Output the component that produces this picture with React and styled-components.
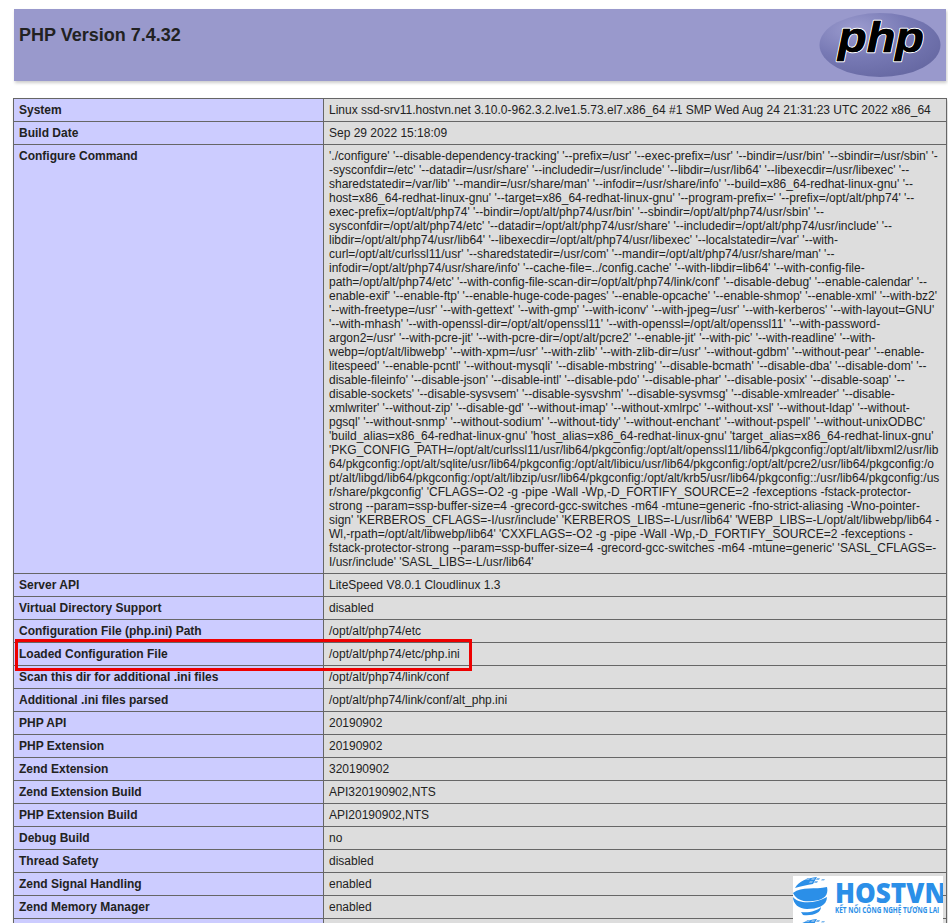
import React from 'react';
import styled, { createGlobalStyle } from 'styled-components';

const Global = createGlobalStyle`
  html, body { margin: 0; padding: 0; height: 923px; overflow: hidden; background: #fff; }
  body { font-family: "Liberation Sans", Arial, sans-serif; color: #222; }
`;
const Page = styled.div`
  position: relative;
  height: 923px;
  overflow: hidden;
  padding: 9px 0 0 14px;
  box-sizing: border-box;
`;
const Header = styled.header`
  width: 932px;
  height: 72px;
  box-sizing: border-box;
  background: #99c;
  box-shadow: 1px 2px 3px #ccc;
  padding: 16px 5px 0;
  display: flex;
  justify-content: space-between;
  align-items: flex-start;
`;
const Title = styled.h1`
  margin: 0;
  font-size: 18px;
  line-height: 21px;
  font-weight: bold;
  color: #222;
`;
const Logo = styled.svg`
  width: 124px;
  height: 68px;
  margin: -14px -1px 0 0;
  flex: none;
`;
const Table = styled.table`
  border-collapse: collapse;
  table-layout: fixed;
  width: 934px;
  margin: 17px 0 0 -1px;
  box-shadow: 1px 2px 3px #ccc;
`;
const Key = styled.td`
  border: 1px solid #666;
  background: #ccf;
  font-size: 12px;
  line-height: 14px;
  font-weight: bold;
  vertical-align: baseline;
  padding: 4px 5px;
  color: #222;
`;
const Value = styled.td`
  border: 1px solid #666;
  background: #ddd;
  font-size: 12px;
  line-height: 14px;
  vertical-align: baseline;
  padding: 4px 6px 4px 5px;
  color: #222;
  overflow-wrap: break-word;
`;
const Highlight = styled.div`
  position: absolute;
  left: 15px;
  top: 639px;
  width: 457px;
  height: 32px;
  box-sizing: border-box;
  border: 3px solid #ee0000;
`;
const Brand = styled.div`
  position: absolute;
  left: 793px;
  top: 876px;
  width: 150px;
  height: 47px;
  overflow: hidden;
  background: #fff;
  color: #2b8fe8;
`;
const BrandRow = styled.div`
  display: flex;
  align-items: flex-start;
  height: 41px;
  margin-bottom: 1px;
`;
const BrandMark = styled.svg`
  width: 35px;
  height: 41px;
  flex: none;
`;
const BrandText = styled.div`
  margin-left: 7px;
  width: 108px;
  display: flex;
  flex-direction: column;
`;
const BrandName = styled.div`
  font-family: "Open Sans", sans-serif;
  font-weight: 800;
  font-size: 29px;
  line-height: 26px;
  height: 26px;
  margin-top: 3px;
  white-space: nowrap;
  transform: scaleX(0.9);
  transform-origin: left center;
`;
const BrandTag = styled.div`
  font-family: "Open Sans", sans-serif;
  font-weight: 700;
  font-size: 8px;
  line-height: 9px;
  white-space: nowrap;
  transform: scaleX(0.8);
  transform-origin: left center;
`;

const configure = `'./configure' '--disable-dependency-tracking' '--prefix=/usr' '--exec-prefix=/usr' '--bindir=/usr/bin' '--sbindir=/usr/sbin' '--sysconfdir=/etc' '--datadir=/usr/share' '--includedir=/usr/include' '--libdir=/usr/lib64' '--libexecdir=/usr/libexec' '--sharedstatedir=/var/lib' '--mandir=/usr/share/man' '--infodir=/usr/share/info' '--build=x86_64-redhat-linux-gnu' '--host=x86_64-redhat-linux-gnu' '--target=x86_64-redhat-linux-gnu' '--program-prefix=' '--prefix=/opt/alt/php74' '--exec-prefix=/opt/alt/php74' '--bindir=/opt/alt/php74/usr/bin' '--sbindir=/opt/alt/php74/usr/sbin' '--sysconfdir=/opt/alt/php74/etc' '--datadir=/opt/alt/php74/usr/share' '--includedir=/opt/alt/php74/usr/include' '--libdir=/opt/alt/php74/usr/lib64' '--libexecdir=/opt/alt/php74/usr/libexec' '--localstatedir=/var' '--with-curl=/opt/alt/curlssl11/usr' '--sharedstatedir=/usr/com' '--mandir=/opt/alt/php74/usr/share/man' '--infodir=/opt/alt/php74/usr/share/info' '--cache-file=../config.cache' '--with-libdir=lib64' '--with-config-file-path=/opt/alt/php74/etc' '--with-config-file-scan-dir=/opt/alt/php74/link/conf' '--disable-debug' '--enable-calendar' '--enable-exif' '--enable-ftp' '--enable-huge-code-pages' '--enable-opcache' '--enable-shmop' '--enable-xml' '--with-bz2' '--with-freetype=/usr' '--with-gettext' '--with-gmp' '--with-iconv' '--with-jpeg=/usr' '--with-kerberos' '--with-layout=GNU' '--with-mhash' '--with-openssl-dir=/opt/alt/openssl11' '--with-openssl=/opt/alt/openssl11' '--with-password-argon2=/usr' '--with-pcre-jit' '--with-pcre-dir=/opt/alt/pcre2' '--enable-jit' '--with-pic' '--with-readline' '--with-webp=/opt/alt/libwebp' '--with-xpm=/usr' '--with-zlib' '--with-zlib-dir=/usr' '--without-gdbm' '--without-pear' '--enable-litespeed' '--enable-pcntl' '--without-mysqli' '--disable-mbstring' '--disable-bcmath' '--disable-dba' '--disable-dom' '--disable-fileinfo' '--disable-json' '--disable-intl' '--disable-pdo' '--disable-phar' '--disable-posix' '--disable-soap' '--disable-sockets' '--disable-sysvsem' '--disable-sysvshm' '--disable-sysvmsg' '--disable-xmlreader' '--disable-xmlwriter' '--without-zip' '--disable-gd' '--without-imap' '--without-xmlrpc' '--without-xsl' '--without-ldap' '--without-pgsql' '--without-snmp' '--without-sodium' '--without-tidy' '--without-enchant' '--without-pspell' '--without-unixODBC' 'build_alias=x86_64-redhat-linux-gnu' 'host_alias=x86_64-redhat-linux-gnu' 'target_alias=x86_64-redhat-linux-gnu' 'PKG_CONFIG_PATH=/opt/alt/curlssl11/usr/lib64/pkgconfig:/opt/alt/openssl11/lib64/pkgconfig:/opt/alt/libxml2/usr/lib64/pkgconfig:/opt/alt/sqlite/usr/lib64/pkgconfig:/opt/alt/libicu/usr/lib64/pkgconfig:/opt/alt/pcre2/usr/lib64/pkgconfig:/opt/alt/libgd/lib64/pkgconfig:/opt/alt/libzip/usr/lib64/pkgconfig:/opt/alt/krb5/usr/lib64/pkgconfig::/usr/lib64/pkgconfig:/usr/share/pkgconfig' 'CFLAGS=-O2 -g -pipe -Wall -Wp,-D_FORTIFY_SOURCE=2 -fexceptions -fstack-protector-strong --param=ssp-buffer-size=4 -grecord-gcc-switches -m64 -mtune=generic -fno-strict-aliasing -Wno-pointer-sign' 'KERBEROS_CFLAGS=-I/usr/include' 'KERBEROS_LIBS=-L/usr/lib64' 'WEBP_LIBS=-L/opt/alt/libwebp/lib64 -Wl,-rpath=/opt/alt/libwebp/lib64' 'CXXFLAGS=-O2 -g -pipe -Wall -Wp,-D_FORTIFY_SOURCE=2 -fexceptions -fstack-protector-strong --param=ssp-buffer-size=4 -grecord-gcc-switches -m64 -mtune=generic' 'SASL_CFLAGS=-I/usr/include' 'SASL_LIBS=-L/usr/lib64'`;

const rows = [
  ['System', 'Linux ssd-srv11.hostvn.net 3.10.0-962.3.2.lve1.5.73.el7.x86_64 #1 SMP Wed Aug 24 21:31:23 UTC 2022 x86_64'],
  ['Build Date', 'Sep 29 2022 15:18:09'],
  ['Configure Command', configure],
  ['Server API', 'LiteSpeed V8.0.1 Cloudlinux 1.3'],
  ['Virtual Directory Support', 'disabled'],
  ['Configuration File (php.ini) Path', '/opt/alt/php74/etc'],
  ['Loaded Configuration File', '/opt/alt/php74/etc/php.ini'],
  ['Scan this dir for additional .ini files', '/opt/alt/php74/link/conf'],
  ['Additional .ini files parsed', '/opt/alt/php74/link/conf/alt_php.ini'],
  ['PHP API', '20190902'],
  ['PHP Extension', '20190902'],
  ['Zend Extension', '320190902'],
  ['Zend Extension Build', 'API320190902,NTS'],
  ['PHP Extension Build', 'API20190902,NTS'],
  ['Debug Build', 'no'],
  ['Thread Safety', 'disabled'],
  ['Zend Signal Handling', 'enabled'],
  ['Zend Memory Manager', 'enabled'],
  ['', ''],
];

const PhpLogo = () => (
  <Logo viewBox="0 0 124 68" aria-label="php">
    <defs>
      <radialGradient id="phpGrad" cx="0.3" cy="0.25" r="0.9">
        <stop offset="0" stopColor="#9c9ccf" />
        <stop offset="0.5" stopColor="#7779b4" />
        <stop offset="1" stopColor="#63659f" />
      </radialGradient>
    </defs>
    <ellipse cx="62" cy="34" rx="60.5" ry="32" fill="url(#phpGrad)" />
    <text
      x="20"
      y="41"
      textLength="86"
      lengthAdjust="spacingAndGlyphs"
      fontFamily="Liberation Sans, sans-serif"
      fontStyle="italic"
      fontWeight="bold"
      fontSize="43"
      fill="#000"
      stroke="#fff"
      strokeWidth="2.4"
      strokeLinejoin="round"
      paintOrder="stroke"
    >
      php
    </text>
    <text
      x="20"
      y="41"
      textLength="86"
      lengthAdjust="spacingAndGlyphs"
      fontFamily="Liberation Sans, sans-serif"
      fontStyle="italic"
      fontWeight="bold"
      fontSize="43"
      fill="#000"
      stroke="#000"
      strokeWidth="0.6"
      aria-hidden="true"
    >
      php
    </text>
  </Logo>
);

const Swirl = () => (
  <BrandMark viewBox="0 0 35 41">
    <path d="M2 12 C6 5 14 2 24 1 L20 8 C14 9 8 10 2 12Z" fill="#2b8fe8" />
    <path d="M14 2 h3 l-1 2 h-3Z M19 2 h3 l-1 2 h-3Z M24 2 h3 l-1 2 h-3Z M29 3 h3 l-1 1.5 h-3Z M17 5 h3 l-1 2 h-3Z M22 5 h3 l-1 2 h-3Z" fill="#7fb9ee" />
    <path d="M0 17 C9 10 22 14 34 11 C36 20 30 24 20 25 C12 26 4 25 0 17Z" fill="#2b8fe8" />
    <path d="M0 21 C5 28 22 28 34 21 C34 30 24 33 14 33 C6 33 0 28 0 21Z" fill="#2b8fe8" />
    <path d="M8 36 C16 37 24 35 28 31 C28 37 20 40 10 39Z" fill="#2b8fe8" />
  </BrandMark>
);

const BrandLine = () => (
  <BrandRow>
    <Swirl />
    <BrandText>
      <BrandName>HOSTVN</BrandName>
      <BrandTag>KẾT NỐI CÔNG NGHỆ TƯƠNG LAI</BrandTag>
    </BrandText>
  </BrandRow>
);

export default function App() {
  return (
    <Page>
      <Global />
      <Header>
        <Title>PHP Version 7.4.32</Title>
        <PhpLogo />
      </Header>
      <Table>
        <colgroup>
          <col style={{ width: 310 }} />
          <col />
        </colgroup>
        <tbody>
          {rows.map(([k, v], i) => (
            <tr key={i}>
              <Key>{k}</Key>
              <Value>{v}</Value>
            </tr>
          ))}
        </tbody>
      </Table>
      <Highlight />
      <Brand>
        <BrandLine />
        <BrandLine />
      </Brand>
    </Page>
  );
}
